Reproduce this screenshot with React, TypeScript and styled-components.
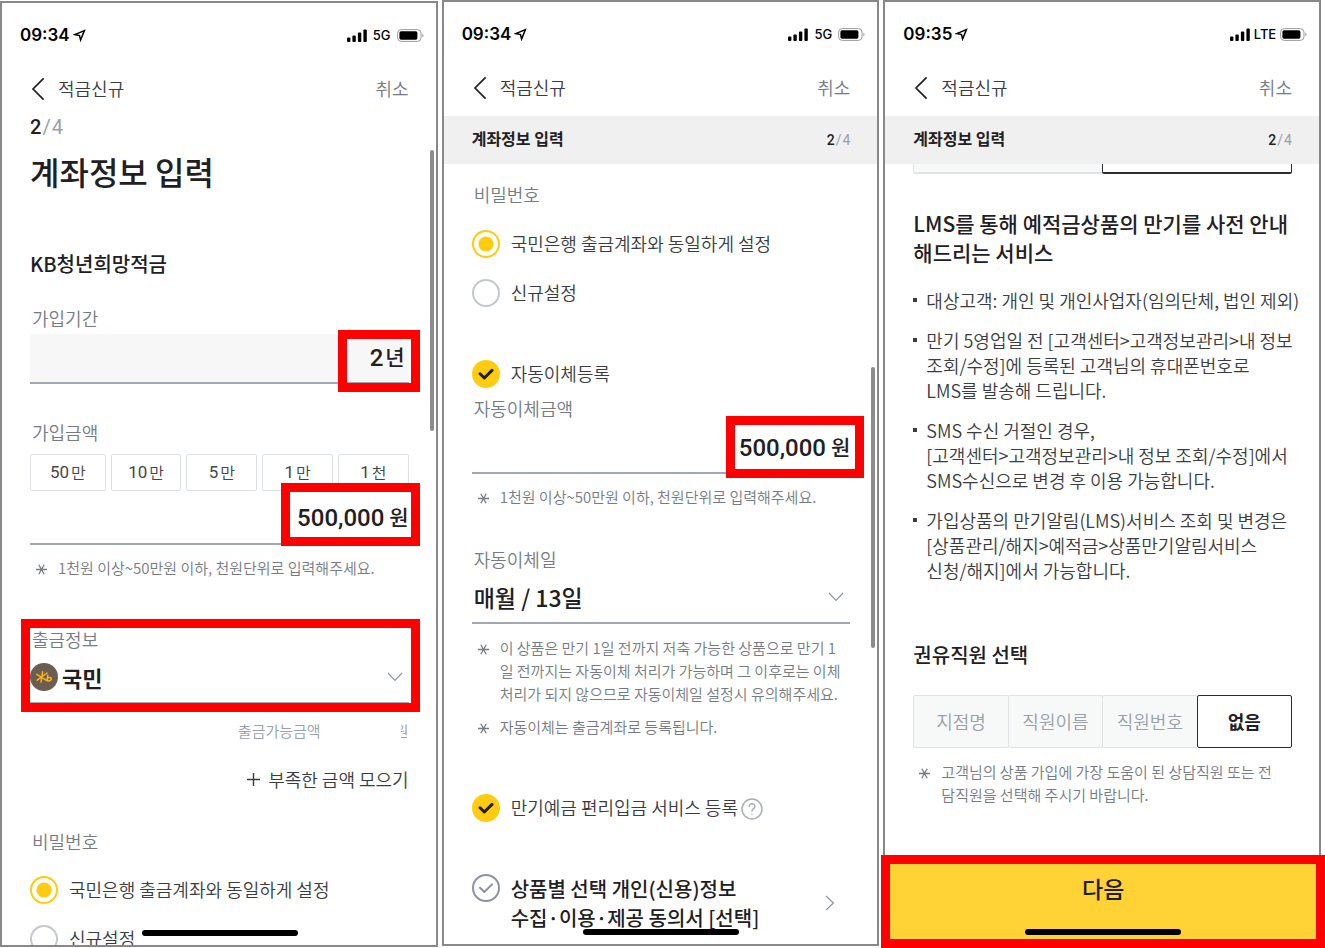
import React from 'react';
import styled, { createGlobalStyle, css } from 'styled-components';

const KR = `"Noto Sans CJK KR", "Noto Sans", sans-serif`;
const NUM = `Roboto, "Noto Sans CJK KR", sans-serif`;

const ink = '#1f2024';
const body = '#3a3c42';
const label = '#757b85';
const faint = '#98a0ab';
const rule = '#a2a7b4';
const red = '#ff0000';

const GlobalStyle = createGlobalStyle`
  * { box-sizing: border-box; }
  html, body { margin: 0; background: #fff; }
  body { font-family: ${KR}; color: ${ink}; overflow: hidden; }
  button, input, select { font: inherit; color: inherit; margin: 0; padding: 0; border: 0; background: none; }
  h1, h2, p, ul, fieldset { margin: 0; padding: 0; border: 0; min-width: 0; }
  ul { list-style: none; }
`;

const Page = styled.main`
  display: grid;
  grid-template-columns: repeat(3, minmax(0, 1fr));
  gap: 4px;
  padding-right: 4px;
  height: 100vh;
`;

const Phone = styled.section<{ $lowered?: boolean }>`
  position: relative;
  height: calc(100vh - 2px);
  margin-top: ${(p) => (p.$lowered ? 1 : 0)}px;
  border: 2px solid #888;
`;

const Screen = styled.div`
  height: 100%;
  overflow: hidden;
  display: flex;
  flex-direction: column;
`;

const Status = styled.div`
  flex: none;
  height: 64px;
  padding: 0 12px 0 18px;
  display: flex;
  align-items: center;
  gap: 3px;
  font-family: Inter, sans-serif;
  color: #000;
`;

const Clock = styled.span`
  font-size: 17px;
  font-weight: 600;
`;

const Signals = styled.div`
  margin-left: auto;
  display: flex;
  align-items: center;
`;

const Network = styled.span`
  width: 30px;
  text-align: center;
  font-size: 13px;
  font-weight: 500;
`;

const Nav = styled.nav`
  flex: none;
  height: 44px;
  padding: 0 27px 0 28px;
  display: flex;
  align-items: center;
  justify-content: space-between;
  font-size: 18px;
  font-weight: 350;
`;

const NavButton = styled.button<{ $muted?: boolean }>`
  display: flex;
  align-items: center;
  gap: 12px;
  line-height: 24px;
  color: ${(p) => (p.$muted ? label : body)};
  span { padding-bottom: 2px; }
`;

const StickyBar = styled.header`
  flex: none;
  margin-top: 6px;
  height: 48px;
  padding: 0 27px 0 28px;
  display: flex;
  align-items: center;
  justify-content: space-between;
  background: #f0f0f0;
`;

const StickyTitle = styled.h1`
  padding-bottom: 4px;
  font-size: 16px;
  font-weight: 700;
`;

const Step = styled.p<{ $large?: boolean }>`
  font-family: ${NUM};
  font-size: ${(p) => (p.$large ? 20 : 14)}px;
  line-height: 24px;
  color: ${faint};
  display: flex;
  gap: 1px;
  strong { color: ${ink}; font-weight: 500; }
`;

const Content = styled.div<{ $top: number }>`
  flex: 1;
  min-height: 0;
  padding: ${(p) => p.$top}px 27px 0 28px;
  display: flex;
  flex-direction: column;
  > * { flex: none; }
`;

const Title = styled.h1`
  margin-top: 10px;
  font-size: 32px;
  line-height: 44px;
  font-weight: 500;
`;

const Heading = styled.h2<{ $gap?: number; $wide?: boolean }>`
  margin-top: ${(p) => p.$gap ?? 0}px;
  font-size: ${(p) => (p.$wide ? 21 : 20)}px;
  line-height: 29px;
  font-weight: 500;
  white-space: nowrap;
`;

const FieldLabel = styled.label<{ $gap?: number }>`
  display: block;
  margin-top: ${(p) => p.$gap ?? 0}px;
  padding: 0 0 2px 2px;
  font-size: 18px;
  line-height: 22px;
  font-weight: 350;
  color: ${label};
`;

const Field = styled.div<{ $filled?: boolean; $height: number; $gap?: number }>`
  position: relative;
  display: flex;
  align-items: center;
  gap: 5px;
  height: ${(p) => p.$height}px;
  margin-top: ${(p) => p.$gap ?? 0}px;
  border-bottom: 2px solid ${rule};
  ${(p) => p.$filled && css`
    gap: 2px;
    background: #f7f7f7;
    padding: 0 4px 2px 0;
  `}
`;

const NumberInput = styled.input`
  flex: 1;
  min-width: 0;
  width: 100%;
  padding-top: 2px;
  font-family: ${NUM};
  font-size: 24px;
  line-height: 30px;
  font-weight: 500;
  text-align: right;
  outline: none;
`;

const Unit = styled.span`
  padding-bottom: 2px;
  font-size: 21px;
  line-height: 30px;
  font-weight: 500;
`;

const Mark = styled.span<{ $x: number; $right: number; $y: number; $w?: number; $h: number }>`
  position: absolute;
  pointer-events: none;
  border: 9px solid ${red};
  top: ${(p) => p.$y}px;
  right: ${(p) => -p.$right}px;
  height: ${(p) => p.$h}px;
  ${(p) => (p.$w ? `width: ${p.$w}px;` : `left: ${-p.$x}px;`)}
`;

const Chips = styled.div`
  display: grid;
  grid-template-columns: 76fr repeat(4, 71fr);
  gap: 5px;
  margin-top: 9px;
`;

const Chip = styled.button`
  height: 37px;
  padding-bottom: 2px;
  border: 1px solid #dde1e5;
  border-radius: 2px;
  display: flex;
  align-items: center;
  justify-content: center;
  gap: 2px;
  font-family: ${NUM};
  font-size: 17px;
  color: #44464c;
  small { font-family: ${KR}; font-size: 16px; font-weight: 350; }
`;

const Notes = styled.ul<{ $gap: number }>`
  margin-top: ${(p) => p.$gap}px;
  display: flex;
  flex-direction: column;
  gap: 10px;
`;

const NoteItem = styled.li`
  display: flex;
  gap: 11px;
  padding-left: 6px;
  font-size: 15px;
  line-height: 23px;
  font-weight: 350;
  color: ${label};
  white-space: nowrap;
  svg { flex: none; margin-top: 8px; }
`;

const Group = styled.div<{ $gap: number }>`
  position: relative;
  margin-top: ${(p) => p.$gap}px;
`;

const SelectRow = styled.div<{ $height: number }>`
  display: flex;
  align-items: center;
  gap: 4px;
  height: ${(p) => p.$height}px;
  padding-right: 6px;
  border-bottom: 2px solid ${rule};
  svg { flex: none; }
`;

const Select = styled.select<{ $inset?: boolean }>`
  flex: 1;
  min-width: 0;
  appearance: none;
  padding-left: ${(p) => (p.$inset ? 2 : 0)}px;
  font-size: ${(p) => (p.$inset ? 23 : 22)}px;
  line-height: 32px;
  height: 32px;
  font-weight: ${(p) => (p.$inset ? 500 : 700)};
  outline: none;
`;

const Available = styled.p`
  margin-top: 15px;
  display: flex;
  justify-content: flex-end;
  gap: 80px;
  font-size: 15px;
  line-height: 24px;
  font-weight: 350;
  color: ${faint};
`;

const HalfHidden = styled.span`
  width: 8px;
  overflow: hidden;
  display: flex;
  justify-content: flex-end;
`;

const GatherButton = styled.button`
  margin-top: 23px;
  align-self: flex-end;
  display: flex;
  align-items: center;
  gap: 8px;
  font-size: 18px;
  line-height: 26px;
  font-weight: 350;
  color: ${body};
`;

const Options = styled.fieldset<{ $gap: number }>`
  margin-top: ${(p) => p.$gap}px;
  display: flex;
  flex-direction: column;
  gap: 21px;
`;

const Option = styled.label<{ $gap?: number }>`
  display: flex;
  align-items: flex-start;
  gap: 11px;
  margin-top: ${(p) => p.$gap ?? 0}px;
  font-size: 18px;
  line-height: 26px;
  font-weight: 350;
  color: ${body};
  white-space: nowrap;
`;

const Radio = styled.input`
  flex: none;
  appearance: none;
  width: 28px;
  height: 28px;
  border: 2px solid #c3c8ce;
  border-radius: 50%;
  &:checked {
    border-color: #ffcc12;
    background: radial-gradient(circle, #ffcc12 0 7px, transparent 8px);
  }
`;

const CheckWrap = styled.span`
  flex: none;
  display: grid;
  place-items: center;
  width: 28px;
  height: 28px;
  > * { grid-area: 1 / 1; }
  svg { pointer-events: none; stroke: #8b93a0; stroke-width: 2; }
  input:checked + svg { stroke: ${ink}; stroke-width: 3; }
`;

const Check = styled.input`
  appearance: none;
  width: 28px;
  height: 28px;
  border: 2px solid #8b93a0;
  border-radius: 50%;
  &:checked { border-color: #ffcc12; background: #ffcc12; }
`;

const OptionRow = styled.div<{ $gap: number }>`
  display: flex;
  align-items: center;
  gap: 3px;
  margin-top: ${(p) => p.$gap}px;
`;

const HelpButton = styled.button`
  display: flex;
  margin-top: 2px;
`;

const Consent = styled.div`
  margin-top: 52px;
  display: flex;
  align-items: center;
  justify-content: space-between;
  padding-right: 15px;
`;

const ConsentLabel = styled.label`
  display: flex;
  align-items: flex-start;
  gap: 11px;
  font-size: 20px;
  line-height: 29px;
  font-weight: 500;
  white-space: nowrap;
`;

const IconButton = styled.button`
  display: flex;
`;

const Segments = styled.div<{ $gap?: number }>`
  display: flex;
  margin-top: ${(p) => p.$gap ?? 0}px;
`;

const Segment = styled.button<{ $on?: boolean; $cut?: boolean }>`
  flex: 1 1 0;
  height: ${(p) => (p.$cut ? 10 : 53)}px;
  padding-bottom: 2px;
  border: 1px solid ${(p) => (p.$on ? '#2b2d33' : '#dfe3e6')};
  ${(p) => p.$cut && 'border-top: 0; border-bottom-width: 2px;'}
  background: ${(p) => (p.$on ? '#fff' : '#f7f9f9')};
  border-radius: ${(p) => (p.$cut ? '0 0 2px 2px' : '2px')};
  font-size: 18px;
  font-weight: ${(p) => (p.$on ? 700 : 350)};
  color: ${(p) => (p.$on ? ink : faint)};
  & + & { margin-left: -1px; }
`;

const Bullets = styled.ul`
  margin-top: 21px;
  display: flex;
  flex-direction: column;
  gap: 15px;
`;

const Bullet = styled.li`
  display: flex;
  gap: 9px;
  font-size: 18px;
  line-height: 25px;
  font-weight: 350;
  color: ${body};
  white-space: nowrap;
  &::before {
    content: '';
    flex: none;
    width: 4px;
    height: 4px;
    margin-top: 10px;
    background: ${body};
  }
`;

const ScrollThumb = styled.span<{ $y: number }>`
  position: absolute;
  top: ${(p) => p.$y}px;
  right: 2px;
  width: 4px;
  height: 281px;
  border-radius: 2px;
  background: #8c8c8c;
`;

const HomeBar = styled.span`
  position: absolute;
  left: 50%;
  bottom: 9px;
  width: 156px;
  height: 6px;
  margin-left: -77px;
  border-radius: 3px;
  background: #000;
`;

const NextButton = styled.button`
  position: absolute;
  left: -4px;
  right: -6px;
  bottom: -4px;
  height: 93px;
  border: 9px solid ${red};
  padding-bottom: 28px;
  background: #ffd236;
  font-size: 23px;
  line-height: 30px;
  font-weight: 500;
`;

const StatusBar = ({ time, network }: { time: string; network: string }) => (
  <Status>
    <Clock>{time}</Clock>
    <svg width="13" height="14" viewBox="0 0 13 14" fill="none" stroke="#000" strokeWidth="1.5" strokeLinejoin="miter">
      <path d="M1.8 6.6 11.4 2.6 7.6 12 6.5 7.6Z" />
    </svg>
    <Signals>
      <svg width="20" height="13" viewBox="0 0 20 13">
        <rect x="0" y="8.5" width="3.4" height="4.5" rx="1" />
        <rect x="5.4" y="6.5" width="3.4" height="6.5" rx="1" />
        <rect x="10.9" y="3.5" width="3.4" height="9.5" rx="1" />
        <rect x="16.4" y="0.5" width="3.4" height="12.5" rx="1" />
      </svg>
      <Network>{network}</Network>
      <svg width="27" height="13" viewBox="0 0 27 13">
        <rect x="0.6" y="0.6" width="23.4" height="11.8" rx="3.6" fill="none" stroke="#9b9b9b" />
        <rect x="2.4" y="2.3" width="18" height="8.4" rx="1.6" />
        <path d="M25.4 4.6c1.5.7 1.5 3.1 0 3.8z" fill="#9b9b9b" />
      </svg>
    </Signals>
  </Status>
);

const TopNav = () => (
  <Nav>
    <NavButton type="button">
      <svg width="16" height="24" viewBox="0 0 16 24" fill="none" stroke={ink} strokeWidth="1.7">
        <path d="M13.6 1.4 3 12l10.6 10.6" />
      </svg>
      <span>적금신규</span>
    </NavButton>
    <NavButton type="button" $muted><span>취소</span></NavButton>
  </Nav>
);

const Sticky = () => (
  <StickyBar>
    <StickyTitle>계좌정보 입력</StickyTitle>
    <Step><strong>2</strong><span>/</span><span>4</span></Step>
  </StickyBar>
);

const Note = ({ children }: { children: React.ReactNode }) => (
  <NoteItem>
    <svg width="11" height="11" viewBox="0 0 11 11" fill="none" stroke={label} strokeWidth="1.3">
      <path d="M0 5.5h11M2.8 .8l5.4 9.4M8.2 .8 2.8 10.2" />
    </svg>
    <span>{children}</span>
  </NoteItem>
);

const ChevronDown = () => (
  <svg width="16" height="10" viewBox="0 0 16 10" fill="none" stroke="#8f96a3" strokeWidth="1.2">
    <path d="M1 1l7 7.4L15 1" />
  </svg>
);

const Tick = ({ id, checked }: { id: string; checked?: boolean }) => (
  <CheckWrap>
    <Check type="checkbox" id={id} defaultChecked={checked} />
    <svg width="16" height="12" viewBox="0 0 16 12" fill="none" strokeLinecap="round" strokeLinejoin="round">
      <path d="M2 5.8 6.3 10 14 2.4" />
    </svg>
  </CheckWrap>
);

const PasswordOptions = ({ name, gap }: { name: string; gap: number }) => (
  <Options $gap={gap}>
    <Option>
      <Radio type="radio" name={name} defaultChecked />
      국민은행 출금계좌와 동일하게 설정
    </Option>
    <Option>
      <Radio type="radio" name={name} />
      신규설정
    </Option>
  </Options>
);

const amounts: [string, string][] = [['50', '만'], ['10', '만'], ['5', '만'], ['1', '만'], ['1', '천']];

const AccountScreen = () => (
  <Phone $lowered>
    <Screen>
      <StatusBar time="09:34" network="5G" />
      <TopNav />
      <Content $top={4}>
        <Step $large><strong>2</strong><span>/</span><span>4</span></Step>
        <Title>계좌정보 입력</Title>
        <Heading $gap={56}>KB청년희망적금</Heading>
        <FieldLabel htmlFor="period" $gap={29}>가입기간</FieldLabel>
        <Field $filled $height={50} $gap={3}>
          <NumberInput id="period" defaultValue="2" />
          <Unit>년</Unit>
          <Mark $x={0} $right={11} $y={-4} $w={82} $h={62} />
        </Field>
        <FieldLabel htmlFor="amount" $gap={37}>가입금액</FieldLabel>
        <Chips>
          {amounts.map(([n, u]) => (
            <Chip type="button" key={n + u}>{n}<small>{u}</small></Chip>
          ))}
        </Chips>
        <Field $height={54}>
          <NumberInput id="amount" defaultValue="500,000" />
          <Unit>원</Unit>
          <Mark $x={0} $right={11} $y={-8} $w={139} $h={63} />
        </Field>
        <Notes $gap={11}>
          <Note>1천원 이상~50만원 이하, 천원단위로 입력해주세요.</Note>
        </Notes>
        <Group $gap={49}>
          <FieldLabel htmlFor="bank">출금정보</FieldLabel>
          <SelectRow $height={52}>
            <svg width="28" height="28" viewBox="0 0 28 28" fill="none" stroke="#fbb615" strokeWidth="1.5" strokeLinecap="round">
              <circle cx="14" cy="14" r="14" fill="#6b5e50" stroke="none" />
              <path d="M12.6 8.8 11 19M6.8 11.4l10.4 6.4M17 10 7.2 17.2M17.8 12.2l-.8 5.6M17.2 15.4c1.6-1.4 4.4-1.2 4 .8-.4 1.8-2.8 2-4.2 1.4" />
            </svg>
            <Select id="bank" defaultValue="국민"><option>국민</option></Select>
            <ChevronDown />
          </SelectRow>
          <Mark $x={9} $right={11} $y={-9} $h={93} />
        </Group>
        <Available>
          <span>출금가능금액</span>
          <HalfHidden>원</HalfHidden>
        </Available>
        <GatherButton type="button">
          <svg width="13" height="13" viewBox="0 0 13 13" stroke={body} strokeWidth="1.4">
            <path d="M0 6.5h13M6.5 0v13" />
          </svg>
          부족한 금액 모으기
        </GatherButton>
        <FieldLabel as="p" $gap={38}>비밀번호</FieldLabel>
        <PasswordOptions name="pw-account" gap={22} />
      </Content>
    </Screen>
    <ScrollThumb $y={147} />
    <HomeBar />
  </Phone>
);

const TransferScreen = () => (
  <Phone>
    <Screen>
      <StatusBar time="09:34" network="5G" />
      <TopNav />
      <Sticky />
      <Content $top={19}>
        <FieldLabel as="p">비밀번호</FieldLabel>
        <PasswordOptions name="pw-transfer" gap={23} />
        <Option $gap={53}>
          <Tick id="auto" checked />
          자동이체등록
        </Option>
        <FieldLabel htmlFor="auto-amount" $gap={9}>자동이체금액</FieldLabel>
        <Field $height={53}>
          <NumberInput id="auto-amount" defaultValue="500,000" />
          <Unit>원</Unit>
          <Mark $x={0} $right={14} $y={-5} $w={138} $h={62} />
        </Field>
        <Notes $gap={11}>
          <Note>1천원 이상~50만원 이하, 천원단위로 입력해주세요.</Note>
        </Notes>
        <FieldLabel htmlFor="day" $gap={40}>자동이체일</FieldLabel>
        <SelectRow $height={52}>
          <Select id="day" $inset defaultValue="매월 / 13일"><option>매월 / 13일</option></Select>
          <ChevronDown />
        </SelectRow>
        <Notes $gap={12}>
          <Note>이 상품은 만기 1일 전까지 저축 가능한 상품으로 만기 1<br />일 전까지는 자동이체 처리가 가능하며 그 이후로는 이체<br />처리가 되지 않으므로 자동이체일 설정시 유의해주세요.</Note>
          <Note>자동이체는 출금계좌로 등록됩니다.</Note>
        </Notes>
        <OptionRow $gap={56}>
          <Option>
            <Tick id="maturity" checked />
            만기예금 편리입금 서비스 등록
          </Option>
          <HelpButton type="button" aria-label="도움말">
            <svg width="22" height="22" viewBox="0 0 22 22" fill="none" stroke="#a9afb8" strokeWidth="1.5" strokeLinecap="round">
              <circle cx="11" cy="11" r="10" />
              <path d="M8.2 8.6c0-3.8 5.7-3.8 5.7-.2 0 2.2-2.9 2.1-2.9 4.5M11 15.9v.2" />
            </svg>
          </HelpButton>
        </OptionRow>
        <Consent>
          <ConsentLabel>
            <Tick id="consent" />
            <span>상품별 선택 개인(신용)정보<br />수집·이용·제공 동의서 [선택]</span>
          </ConsentLabel>
          <IconButton type="button" aria-label="상세 보기">
            <svg width="10" height="16" viewBox="0 0 10 16" fill="none" stroke="#8f96a3" strokeWidth="1.2">
              <path d="M1 1l7.4 7L1 15" />
            </svg>
          </IconButton>
        </Consent>
      </Content>
    </Screen>
    <ScrollThumb $y={365} />
    <HomeBar />
  </Phone>
);

const ServiceScreen = () => (
  <Phone>
    <Screen>
      <StatusBar time="09:35" network="LTE" />
      <TopNav />
      <Sticky />
      <Content $top={0}>
        <Segments>
          <Segment type="button" $cut aria-label="신청" />
          <Segment type="button" $cut $on aria-label="미신청" />
        </Segments>
        <Heading $gap={35} $wide>LMS를 통해 예적금상품의 만기를 사전 안내<br />해드리는 서비스</Heading>
        <Bullets>
          <Bullet>대상고객: 개인 및 개인사업자(임의단체, 법인 제외)</Bullet>
          <Bullet>만기 5영업일 전 [고객센터&gt;고객정보관리&gt;내 정보<br />조회/수정]에 등록된 고객님의 휴대폰번호로<br />LMS를 발송해 드립니다.</Bullet>
          <Bullet>SMS 수신 거절인 경우,<br />[고객센터&gt;고객정보관리&gt;내 정보 조회/수정]에서<br />SMS수신으로 변경 후 이용 가능합니다.</Bullet>
          <Bullet>가입상품의 만기알림(LMS)서비스 조회 및 변경은<br />[상품관리/해지&gt;예적금&gt;상품만기알림서비스<br />신청/해지]에서 가능합니다.</Bullet>
        </Bullets>
        <Heading $gap={57}>권유직원 선택</Heading>
        <Segments $gap={26}>
          <Segment type="button">지점명</Segment>
          <Segment type="button">직원이름</Segment>
          <Segment type="button">직원번호</Segment>
          <Segment type="button" $on>없음</Segment>
        </Segments>
        <Notes $gap={12}>
          <Note>고객님의 상품 가입에 가장 도움이 된 상담직원 또는 전<br />담직원을 선택해 주시기 바랍니다.</Note>
        </Notes>
      </Content>
    </Screen>
    <NextButton type="button">다음</NextButton>
    <HomeBar />
  </Phone>
);

export default function App() {
  return (
    <>
      <GlobalStyle />
      <Page>
        <AccountScreen />
        <TransferScreen />
        <ServiceScreen />
      </Page>
    </>
  );
}
